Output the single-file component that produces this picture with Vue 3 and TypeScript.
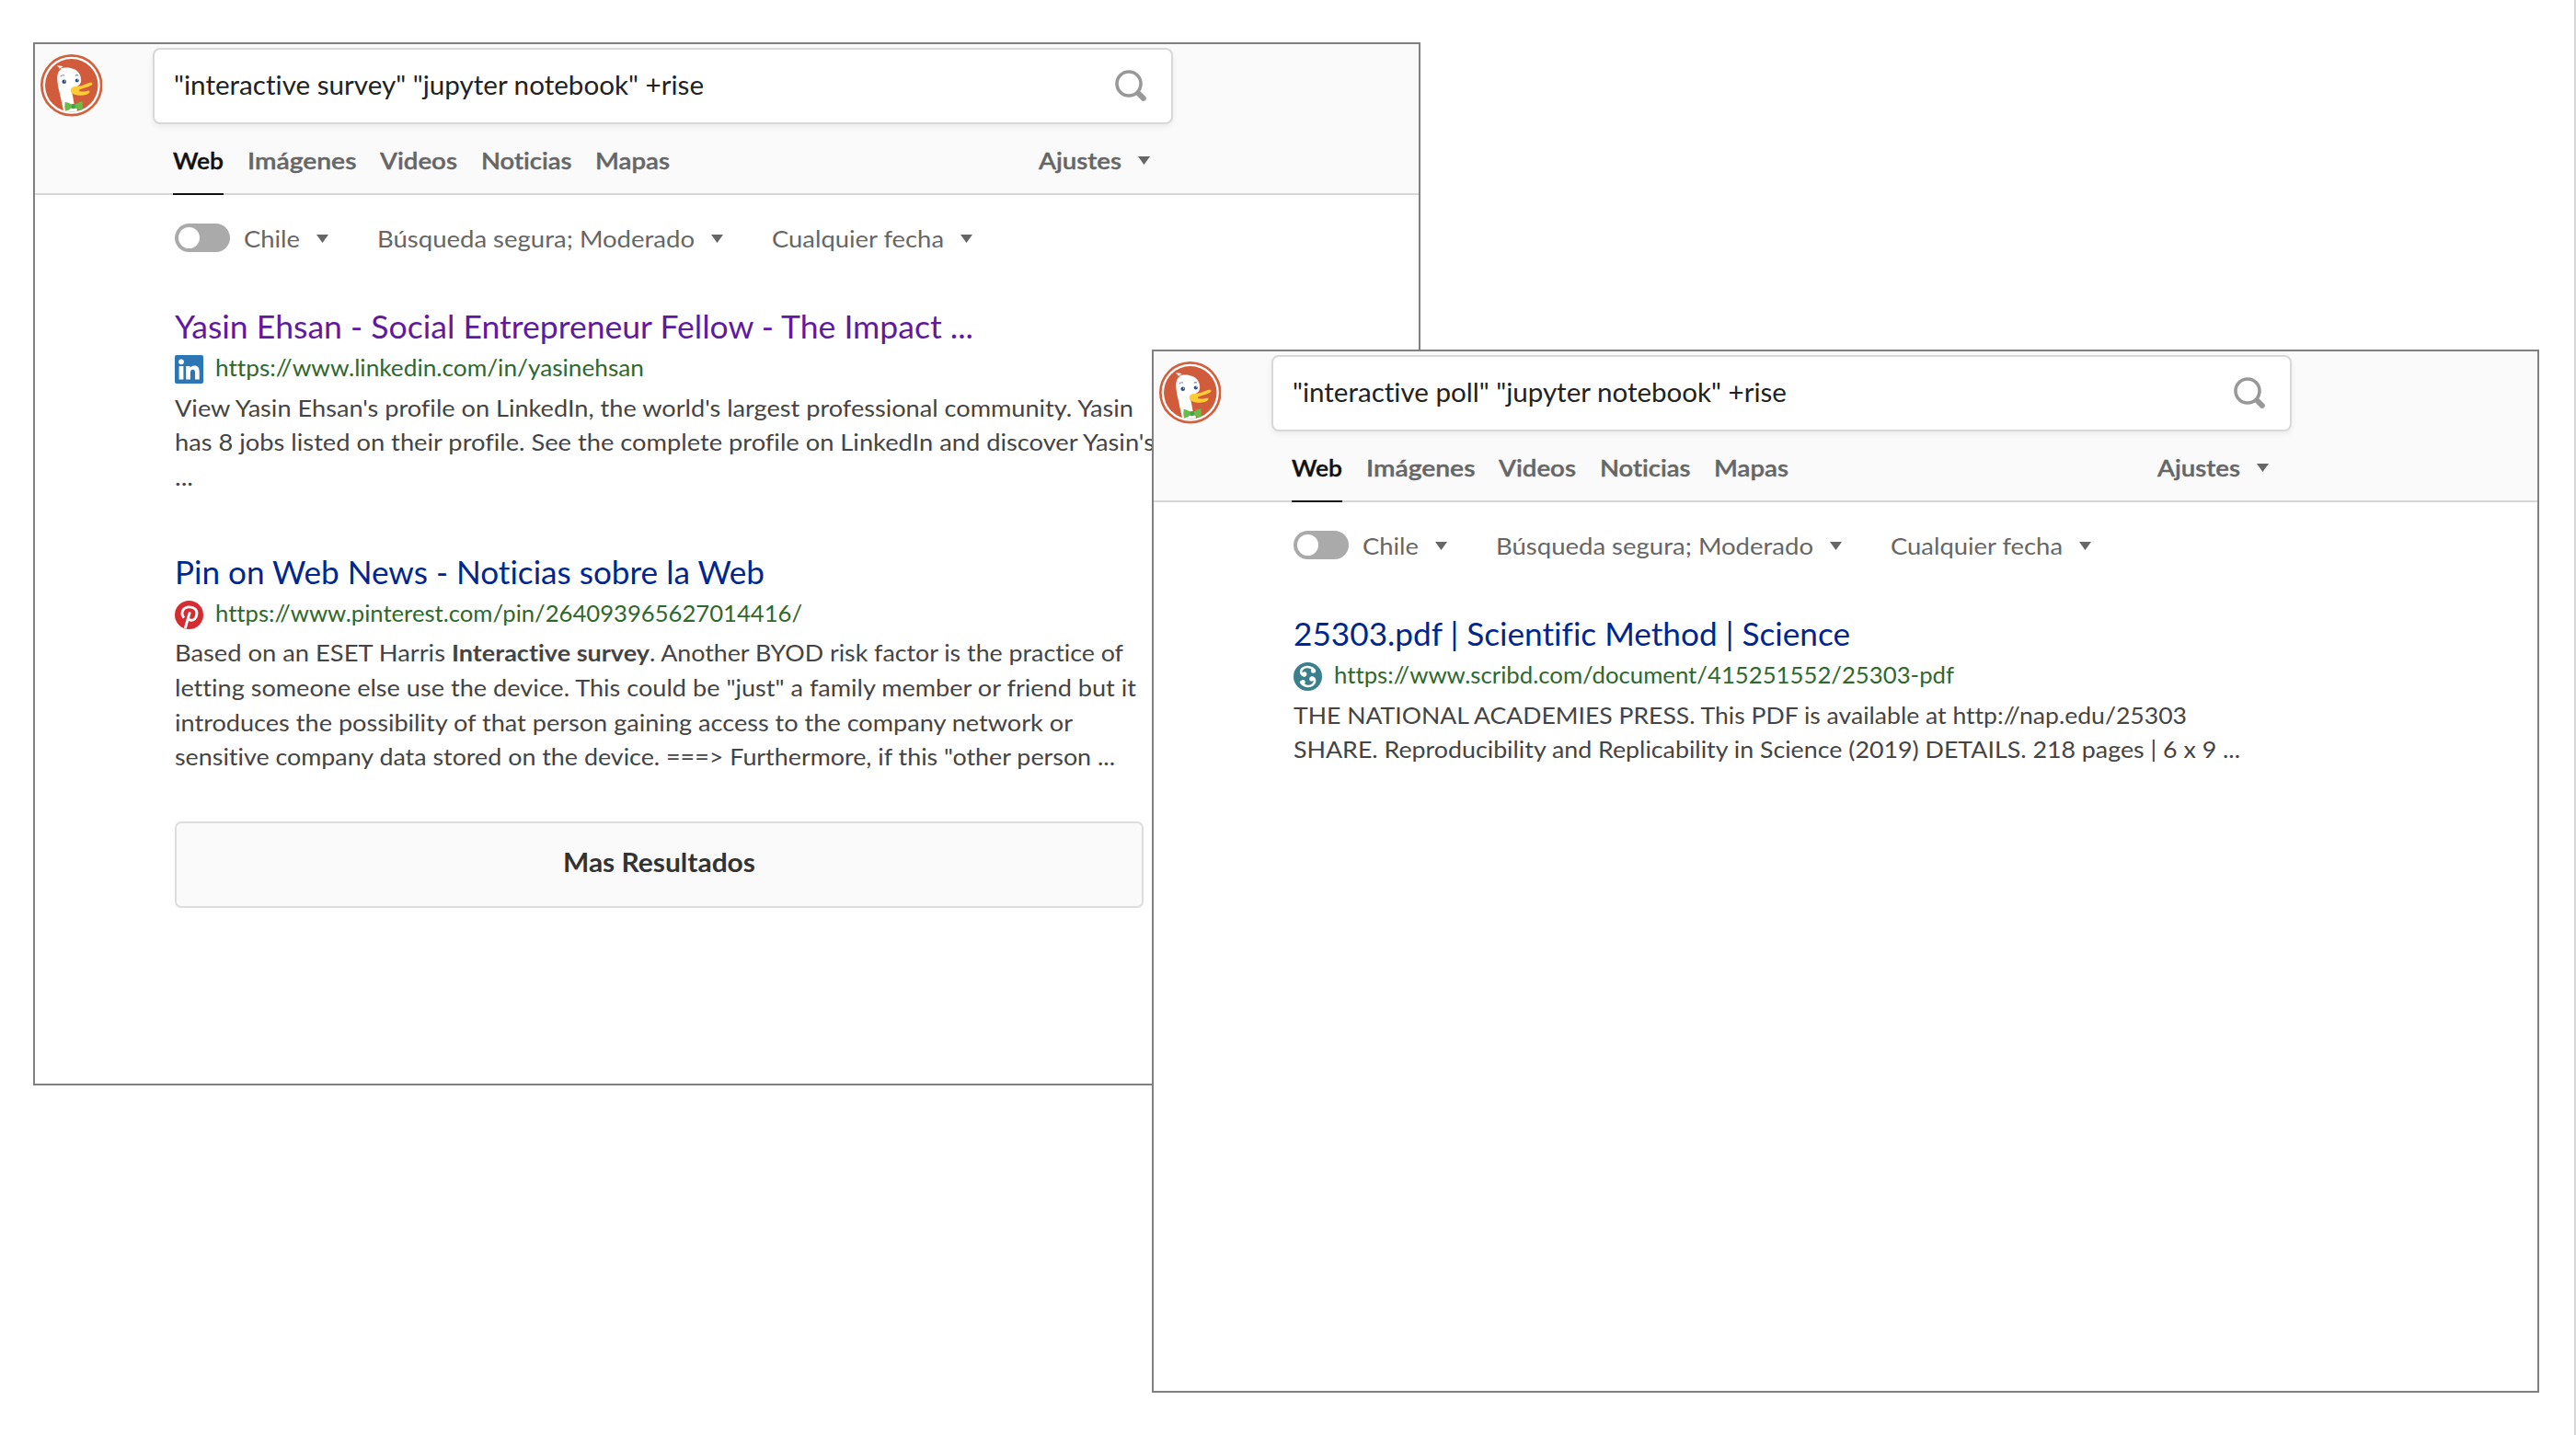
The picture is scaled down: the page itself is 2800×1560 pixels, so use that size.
<script setup lang="ts">
import type { Directive } from 'vue'

interface Run { text: string; width: number; bold?: boolean }
interface Result {
  title: string
  titleWidth: number
  visited?: boolean
  icon: 'linkedin' | 'pinterest' | 'scribd'
  url: string
  urlWidth: number
  lines: Run[][]
}
interface SearchWindow {
  id: string
  query: string
  queryWidth: number
  results: Result[]
  more: boolean
}

/* Widens or narrows the letters of a run of text so that it fills the given measure. */
const vFit: Directive<HTMLElement, number> = {
  mounted(el, { value }) {
    const natural = el.getBoundingClientRect().width
    if (natural > 0) {
      el.style.width = `${value}px`
      el.style.transform = `scaleX(${(value / natural).toFixed(4)})`
    }
  },
}

const tabs = [
  { label: 'Web', width: 55, active: true },
  { label: 'Imágenes', width: 118.5 },
  { label: 'Videos', width: 84 },
  { label: 'Noticias', width: 98.5 },
  { label: 'Mapas', width: 81 },
]

const filters = [
  { label: 'Chile', width: 61 },
  { label: 'Búsqueda segura; Moderado', width: 345 },
  { label: 'Cualquier fecha', width: 187 },
]

const windows: SearchWindow[] = [
  {
    id: 'survey',
    query: '"interactive survey" "jupyter notebook" +rise',
    queryWidth: 576,
    more: true,
    results: [
      {
        title: 'Yasin Ehsan - Social Entrepreneur Fellow - The Impact ...',
        titleWidth: 868,
        visited: true,
        icon: 'linkedin',
        url: 'https://www.linkedin.com/in/yasinehsan',
        urlWidth: 466,
        lines: [
          [{ text: "View Yasin Ehsan's profile on LinkedIn, the world's largest professional community. Yasin", width: 1042 }],
          [{ text: "has 8 jobs listed on their profile. See the complete profile on LinkedIn and discover Yasin's", width: 1065 }],
          [{ text: '...', width: 20 }],
        ],
      },
      {
        title: 'Pin on Web News - Noticias sobre la Web',
        titleWidth: 641,
        icon: 'pinterest',
        url: 'https://www.pinterest.com/pin/264093965627014416/',
        urlWidth: 638,
        lines: [
          [
            { text: 'Based on an ESET Harris ', width: 301 },
            { text: 'Interactive survey', width: 215, bold: true },
            { text: '. Another BYOD risk factor is the practice of', width: 515 },
          ],
          [{ text: 'letting someone else use the device. This could be "just" a family member or friend but it', width: 1045 }],
          [{ text: 'introduces the possibility of that person gaining access to the company network or', width: 976 }],
          [{ text: 'sensitive company data stored on the device. ===> Furthermore, if this "other person ...', width: 1022 }],
        ],
      },
    ],
  },
  {
    id: 'poll',
    query: '"interactive poll" "jupyter notebook" +rise',
    queryWidth: 537,
    more: false,
    results: [
      {
        title: '25303.pdf | Scientific Method | Science',
        titleWidth: 605,
        icon: 'scribd',
        url: 'https://www.scribd.com/document/415251552/25303-pdf',
        urlWidth: 674,
        lines: [
          [{ text: 'THE NATIONAL ACADEMIES PRESS. This PDF is available at http://nap.edu/25303', width: 971 }],
          [{ text: 'SHARE. Reproducibility and Replicability in Science (2019) DETAILS. 218 pages | 6 x 9 ...', width: 1029 }],
        ],
      },
    ],
  },
]
</script>

<template>
  <main class="canvas">
    <section v-for="w in windows" :key="w.id" class="window" :class="w.id">
      <header class="header">
        <svg class="logo" viewBox="0 0 202 202">
          <circle cx="101" cy="101" r="101" fill="#d2603d" />
          <circle cx="101" cy="101" r="93" fill="#fff" />
          <circle cx="101" cy="101" r="86" fill="#d05c3b" />
          <path fill="#fff" d="M54 37C66 38 72 39 74 42C68 42 61 45 58 49C71 44 85 42 98 45C119 49 131 63 132 82C133 96 124 104 110 108C101 112 99 119 103 128C107 142 108 157 111 168L119 178L120 184Q97 190 75 183C70 162 65 138 60 116C56 98 52 73 57 62C59 55 64 50 68 48C62 46 56 41 54 37Z" />
          <circle cx="77" cy="89" r="7" fill="#2d4f8e" /><circle cx="79.500" cy="87" r="2" fill="#fff" />
          <circle cx="119" cy="85" r="6" fill="#2d4f8e" /><circle cx="121.500" cy="83" r="1.700" fill="#fff" />
          <path d="M65 73Q70 66 78 69M113 70Q118 66 123 69" fill="none" stroke="#7186b6" stroke-width="3" />
          <path fill="#fc3" d="M98 118C98 108 108 104 121 104C137 104 148 94 163 92C170 91 171 97 165 101C154 108 139 110 127 115C123 118 127 121 137 121C145 122 153 118 159 119C163 122 157 129 147 132C130 136 98 133 98 118Z" />
          <path fill="#67bd47" d="M80 155Q91 157 101 163Q108 160 113 163Q125 155 136 152Q139 166 136 181Q123 181 113 175Q106 179 101 175Q92 183 81 184Q77 169 80 155Z" />
          <path fill="#43a347" d="M101 163Q107 160 113 163V175Q107 179 101 175Z" />
        </svg>
        <div class="search-col">
          <div class="search">
            <span v-fit="w.queryWidth" class="query fit">{{ w.query }}</span>
            <svg class="glass" viewBox="0 0 36 36" fill="none" stroke="#989898">
              <circle cx="15" cy="15" r="13" stroke-width="3.600" />
              <path d="M25.500 25.500L30.800 30.800" stroke-width="6" stroke-linecap="round" />
            </svg>
          </div>
          <nav class="tabs">
            <a v-for="t in tabs" :key="t.label" class="tab" :class="{ active: t.active }"><span v-fit="t.width" class="fit">{{ t.label }}</span></a>
            <a class="tab settings"><span v-fit="90" class="fit">Ajustes</span><i class="caret" /></a>
          </nav>
        </div>
      </header>

      <div class="filters">
        <span class="toggle"><i /></span>
        <span v-for="f in filters" :key="f.label" class="filter">
          <span v-fit="f.width" class="fit">{{ f.label }}</span><i class="caret" />
        </span>
      </div>

      <div class="results">
        <article v-for="r in w.results" :key="r.url" class="result">
          <h2 class="title" :class="{ visited: r.visited }"><span v-fit="r.titleWidth" class="fit">{{ r.title }}</span></h2>
          <div class="url">
            <svg v-if="r.icon === 'linkedin'" class="favicon" viewBox="0 0 31 31">
              <rect width="31" height="31" rx="2" fill="#2c76b4" />
              <g fill="#fff">
                <circle cx="7" cy="7.300" r="2.900" />
                <rect x="4.600" y="12" width="4.800" height="14.500" />
                <path d="M12.200 12H16.600V14C17.600 12.500 19.200 11.600 21.300 11.600C25.300 11.600 26.700 14.200 26.700 18.300V26.500H22V19.200C22 17 21.500 15.700 19.700 15.700C17.700 15.700 16.900 17.100 16.900 19.200V26.500H12.200Z" />
              </g>
            </svg>
            <svg v-else-if="r.icon === 'pinterest'" class="favicon" viewBox="0 0 31 31">
              <circle cx="15.500" cy="15.500" r="15.500" fill="#d42c31" />
              <path d="M10 18.600C5.600 13.200 9 6.900 16 6.900C21.200 6.900 24.400 10 23.900 14.500C23.400 18.900 20.600 21.600 17.600 21.300C15.500 21 14.500 19.700 14.900 18.300M16.400 12.300L11.300 30" fill="none" stroke="#fff" stroke-width="2.900" />
            </svg>
            <svg v-else class="favicon" viewBox="0 0 31 31">
              <circle cx="15.500" cy="15.500" r="15.500" fill="#3b7f8c" />
              <g fill="none" stroke="#fff" stroke-width="2.500" stroke-linecap="round">
                <path d="M23 9.300C20.500 5 14 3.800 10.300 6.600C6.600 9.400 8 14 12 14.400" />
                <path d="M8 21.700C10.500 26 17 27.200 20.700 24.400C24.400 21.600 23.600 17.200 20 16.600" />
              </g>
              <circle cx="21.500" cy="9.300" r="2.500" fill="#fff" /><circle cx="11.800" cy="12.800" r="2.600" fill="#fff" />
              <circle cx="19.800" cy="18" r="2.600" fill="#fff" /><circle cx="10.200" cy="21.500" r="2.500" fill="#fff" />
            </svg>
            <span v-fit="r.urlWidth" class="fit">{{ r.url }}</span>
          </div>
          <p class="snippet">
            <span v-for="(line, i) in r.lines" :key="i" class="line"><span v-for="run in line" :key="run.text" v-fit="run.width" class="fit" :class="{ bold: run.bold }">{{ run.text }}</span></span>
          </p>
        </article>
        <button v-if="w.more" class="more"><span v-fit="209" class="fit">Mas Resultados</span></button>
      </div>
    </section>
  </main>
</template>

<style>
body {
  margin: 0;
  background: #fff;
}
</style>

<style scoped>
.canvas {
  position: relative;
  box-sizing: border-box;
  width: 2800px;
  height: 1560px;
  overflow: hidden;
  border-right: 2px solid #d8d8d8;
  background: #fff;
  font-family: Lato, "Open Sans", sans-serif;
  font-size: 25.5px;
  color: #444;
}
.fit {
  display: inline-block;
  flex: none;
  text-align: left;
  white-space: pre;
  font-variant-ligatures: none;
  transform-origin: 0 50%;
}
.window {
  position: absolute;
  box-sizing: border-box;
  width: 1508px;
  height: 1134px;
  overflow: hidden;
  border: 2px solid #808080;
  background: #fff;
}
.survey { left: 36px; top: 46px; }
.poll { left: 1252px; top: 380px; }

.header {
  display: flex;
  align-items: flex-start;
  height: 164px;
  background: #fafafa;
  box-shadow: inset 0 -2px #d6d6d6;
}
.logo {
  flex: none;
  width: 67.5px;
  height: 67.5px;
  margin: 11px 54.8px 0 5.7px;
}
.search-col {
  width: 1109px;
  padding-top: 4px;
}
.search {
  display: flex;
  align-items: center;
  justify-content: space-between;
  box-sizing: border-box;
  height: 83px;
  padding: 0 25px 0 21px;
  border: 2px solid #d8d8d8;
  border-radius: 8px;
  background: #fff;
  box-shadow: 0 3px 6px rgba(0, 0, 0, 0.06);
}
.query {
  padding-bottom: 3px;
  font-size: 28.5px;
  color: #222;
}
.glass {
  width: 36px;
  height: 36px;
}
.tabs {
  display: flex;
  gap: 25.7px;
  height: 77px;
  padding: 0 25px 0 22px;
}
.tab {
  display: flex;
  align-items: center;
  font-weight: 600;
  color: #666;
  -webkit-text-stroke: 0.4px currentColor;
}
.tab.active {
  color: #111;
  box-shadow: inset 0 -2px #111;
}
.settings {
  margin-left: auto;
}
.caret {
  flex: none;
  width: 13px;
  height: 9px;
  margin: 2px 0 0 18px;
  background: #666;
  clip-path: polygon(0 0, 100% 0, 50% 100%);
}

.filters {
  display: flex;
  align-items: center;
  height: 93px;
  padding-left: 152px;
  color: #666;
}
.toggle {
  box-sizing: border-box;
  width: 60px;
  height: 31px;
  padding: 4px;
  border-radius: 16px;
  background: #aaa;
}
.toggle i {
  display: block;
  width: 23px;
  height: 23px;
  border-radius: 50%;
  background: #fff;
}
.filter {
  display: flex;
  align-items: center;
  margin-left: 53px;
}
.toggle + .filter {
  margin-left: 15px;
}

.results {
  width: 1100px;
  padding: 28px 0 0 152px;
}
.result + .result {
  margin-top: 62px;
}
.title {
  height: 44px;
  margin: 0;
  font-size: 34px;
  font-weight: 400;
  line-height: 44px;
  color: #00278e;
}
.title.visited {
  color: #5f1a9f;
}
.url {
  display: flex;
  align-items: center;
  height: 44.6px;
  color: #2f682c;
}
.favicon {
  width: 31px;
  height: 31px;
  margin: 5px 12.5px 0 0;
}
.snippet {
  margin: 3.2px 0 0;
}
.line {
  display: flex;
  height: 37.6px;
  line-height: 37.6px;
}
.bold {
  font-weight: 700;
}
.more {
  display: flex;
  align-items: center;
  justify-content: center;
  box-sizing: border-box;
  width: 1053px;
  height: 94px;
  margin: 51px 0 0;
  padding: 0 0 5px;
  border: 2px solid #ddd;
  border-radius: 7px;
  background: #fafafa;
  font: 700 28.5px Lato, "Open Sans", sans-serif;
  color: #333;
}
</style>
